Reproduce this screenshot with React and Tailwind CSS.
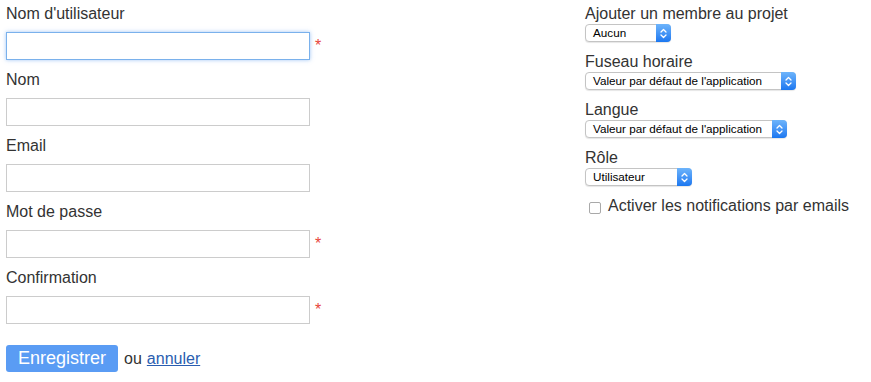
import React from "react";

function Chevrons() {
  return (
    <svg width="7" height="11" viewBox="0 0 7 11" fill="none" stroke="white" strokeWidth="1.3" strokeLinecap="round" strokeLinejoin="round">
      <path d="M1 4 L3.5 1.5 L6 4" />
      <path d="M1 7 L3.5 9.5 L6 7" />
    </svg>
  );
}

function Select({ value, w }) {
  return (
    <div className={`flex h-[18px] items-stretch rounded-[4px] border border-[#c4c4c4] bg-white shadow-[0_1px_1px_rgba(0,0,0,0.1)] ${w}`}>
      <div className="flex flex-1 items-center pl-[7px] text-[11.7px] leading-none text-black">{value}</div>
      <div className="-my-px -mr-px flex w-[15px] items-center justify-center rounded-r-[4px] bg-gradient-to-b from-[#6db4fb] to-[#1a77f0]">
        <Chevrons />
      </div>
    </div>
  );
}

function Field({ label, required, focus }) {
  return (
    <div className="mb-[10px]">
      <label className="mb-2 block text-[16px] leading-[20px]">{label}</label>
      <div className="flex items-start">
        <input
          className={
            focus
              ? "h-[28px] w-[304px] border border-[#7ab1ec] bg-white shadow-[0_0_4px_rgba(82,150,236,0.55)] outline-none"
              : "h-[28px] w-[304px] border border-[#cccccc] bg-white outline-none"
          }
        />
        {required && <span className="ml-[5px] text-[16px] leading-[28px] text-[#e8463a]">*</span>}
      </div>
    </div>
  );
}

function RightField({ label, value, w }) {
  return (
    <div className="mb-[10px]">
      <div className="text-[16px] leading-[20px]">{label}</div>
      <Select value={value} w={w} />
    </div>
  );
}

export default function App() {
  return (
    <div className="flex h-[382px] w-[871px] bg-white font-['Liberation_Sans',Arial,sans-serif] text-[#333]">
      <div className="w-[585px] pl-[6px] pt-[4px]">
        <Field label="Nom d'utilisateur" required focus />
        <Field label="Nom" />
        <Field label="Email" />
        <Field label="Mot de passe" required />
        <Field label="Confirmation" required />
        <div className="mt-[21px] flex items-baseline text-[16px]">
          <button className="h-[27px] rounded-[3px] bg-[#5a9cf4] px-[12px] text-[18px] leading-[27px] text-white">
            Enregistrer
          </button>
          <span className="ml-[6px]">ou</span>
          <a href="#" className="ml-[5px] text-[#2a5db0] underline">annuler</a>
        </div>
      </div>
      <div className="pt-[4px]">
        <RightField label="Ajouter un membre au projet" value="Aucun" w="w-[86px]" />
        <RightField label="Fuseau horaire" value="Valeur par défaut de l'application" w="w-[211px]" />
        <RightField label="Langue" value="Valeur par défaut de l'application" w="w-[202px]" />
        <RightField label="Rôle" value="Utilisateur" w="w-[107px]" />
        <div className="flex items-center text-[16px] leading-[20px]">
          <div className="ml-[4px] mr-[7px] mt-[3px] h-[12px] w-[12px] rounded-[2px] border border-[#a9a9a9] bg-white" />
          <span>Activer les notifications par emails</span>
        </div>
      </div>
    </div>
  );
}
